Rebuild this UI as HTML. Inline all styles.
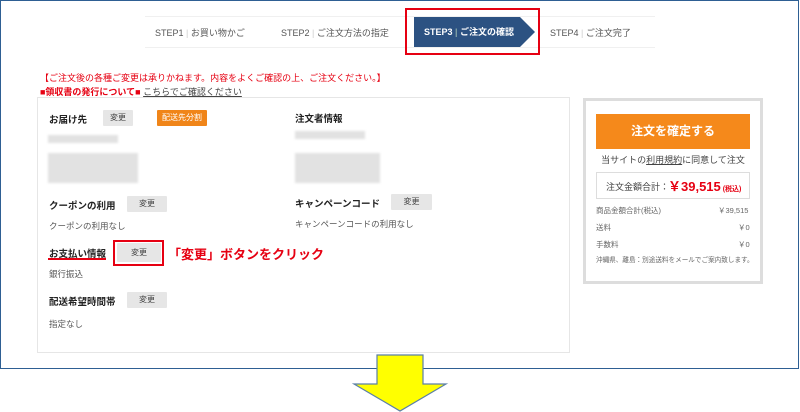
<!DOCTYPE html>
<html><head><meta charset="utf-8"><style>
*{margin:0;padding:0;box-sizing:border-box}
body{width:800px;height:412px;background:#fff;position:relative;overflow:hidden;font-family:"Liberation Sans","Noto Sans CJK JP",sans-serif;color:#333}
.a{position:absolute;white-space:nowrap}
.btn{position:absolute;background:#e6e6e6;font-size:8px;color:#444;text-align:center;border-radius:1px}
.h{font-size:9.5px;font-weight:bold;color:#222}
.t{font-size:8.5px;color:#555}
.blur{position:absolute;background:#e2e2e2;filter:blur(1px)}
</style></head><body>
<div class="a" style="left:0;top:0;width:799px;height:369px;border:1px solid #2e5f93"></div>
<div class="a" style="left:145px;top:16px;width:510px;height:32px;border-top:1px solid #f0f0f0;border-bottom:1px solid #f0f0f0"></div>
<div class="a" style="left:155px;top:26px;font-size:9px;color:#555">STEP1 <span style="color:#ccc">|</span> お買い物かご</div>
<div class="a" style="left:281px;top:26px;font-size:9px;color:#555">STEP2 <span style="color:#ccc">|</span> ご注文方法の指定</div>
<svg class="a" style="left:414px;top:17px" width="122" height="30"><polygon points="0,0 106,0 121,15 106,30 0,30" fill="#2c5282"/></svg>
<div class="a" style="left:424px;top:25px;font-size:9px;color:#fff;font-weight:bold">STEP3 <span style="color:#8aa">|</span> ご注文の確認</div>
<div class="a" style="left:405px;top:8px;width:135px;height:47px;border:2px solid #e60012"></div>
<div class="a" style="left:550px;top:26px;font-size:9px;color:#555">STEP4 <span style="color:#ccc">|</span> ご注文完了</div>
<div class="a" style="left:40px;top:71px;font-size:9px;color:#e60012">【ご注文後の各種ご変更は承りかねます。内容をよくご確認の上、ご注文ください。】</div>
<div class="a" style="left:40px;top:85px;font-size:9px;color:#e60012;font-weight:bold">■領収書の発行について■ <span style="color:#444;font-weight:normal;text-decoration:underline">こちらでご確認ください</span></div>
<div class="a" style="left:37px;top:97px;width:533px;height:256px;border:1px solid #e6e6e6"></div>
<div class="a h" style="left:49px;top:112px">お届け先</div>
<div class="btn" style="left:103px;top:110px;width:30px;height:16px;line-height:16px">変更</div>
<div class="btn" style="left:157px;top:110px;width:50px;height:16px;line-height:16px;background:#f08519;color:#fff">配送先分割</div>
<div class="blur" style="left:48px;top:135px;width:70px;height:8px"></div>
<div class="blur" style="left:48px;top:153px;width:90px;height:30px"></div>
<div class="a h" style="left:295px;top:111px">注文者情報</div>
<div class="blur" style="left:295px;top:131px;width:70px;height:8px"></div>
<div class="blur" style="left:295px;top:153px;width:85px;height:30px"></div>
<div class="a h" style="left:49px;top:198px">クーポンの利用</div>
<div class="btn" style="left:127px;top:196px;width:40px;height:16px;line-height:16px">変更</div>
<div class="a t" style="left:49px;top:220px">クーポンの利用なし</div>
<div class="a h" style="left:295px;top:196px">キャンペーンコード</div>
<div class="btn" style="left:391px;top:194px;width:41px;height:16px;line-height:16px">変更</div>
<div class="a t" style="left:295px;top:218px">キャンペーンコードの利用なし</div>
<div class="a h" style="left:49px;top:246px">お支払い情報</div>
<div class="a" style="left:48px;top:258px;width:58px;height:2px;background:#e60012"></div>
<div class="btn" style="left:117px;top:243px;width:44px;height:19px;line-height:19px">変更</div>
<div class="a" style="left:113px;top:240px;width:51px;height:26px;border:2px solid #e60012"></div>
<div class="a" style="left:168px;top:244px;font-size:13px;font-weight:bold;color:#e60012">「変更」ボタンをクリック</div>
<div class="a t" style="left:49px;top:268px">銀行振込</div>
<div class="a h" style="left:49px;top:294px">配送希望時間帯</div>
<div class="btn" style="left:127px;top:292px;width:40px;height:16px;line-height:16px">変更</div>
<div class="a t" style="left:49px;top:318px">指定なし</div>
<div class="a" style="left:583px;top:98px;width:180px;height:186px;border:3px solid #ddd"></div>
<div class="a" style="left:596px;top:114px;width:154px;height:35px;background:#f5891b;color:#fff;font-size:12px;font-weight:bold;text-align:center;line-height:35px">注文を確定する</div>
<div class="a" style="left:596px;top:153px;width:154px;text-align:center;font-size:9px;color:#444">当サイトの<u>利用規約</u>に同意して注文</div>
<div class="a" style="left:596px;top:172px;width:154px;height:27px;border:1px solid #ddd"></div>
<div class="a" style="left:606px;top:180px;font-size:9px;color:#444">注文金額合計：</div>
<div class="a" style="left:668px;top:176px;font-size:13px;font-weight:bold;color:#e60012">￥39,515<span style="font-size:7px"> (税込)</span></div>
<div class="a" style="left:596px;top:205px;font-size:7.5px;color:#666">商品金額合計(税込)</div>
<div class="a" style="left:718px;top:205px;font-size:7.5px;color:#666">￥39,515</div>
<div class="a" style="left:596px;top:222px;font-size:7.5px;color:#666">送料</div>
<div class="a" style="left:738px;top:222px;font-size:7.5px;color:#666">￥0</div>
<div class="a" style="left:596px;top:239px;font-size:7.5px;color:#666">手数料</div>
<div class="a" style="left:738px;top:239px;font-size:7.5px;color:#666">￥0</div>
<div class="a" style="left:596px;top:254px;font-size:6.6px;color:#666">沖縄県、離島：別途送料をメールでご案内致します。</div>
<svg class="a" style="left:350px;top:354px" width="100" height="58"><polygon points="27,1 73,1 73,30 96,30 50,57 4,30 27,30" fill="#ffff00" stroke="#5a7fa8" stroke-width="1.2"/></svg>
</body></html>
